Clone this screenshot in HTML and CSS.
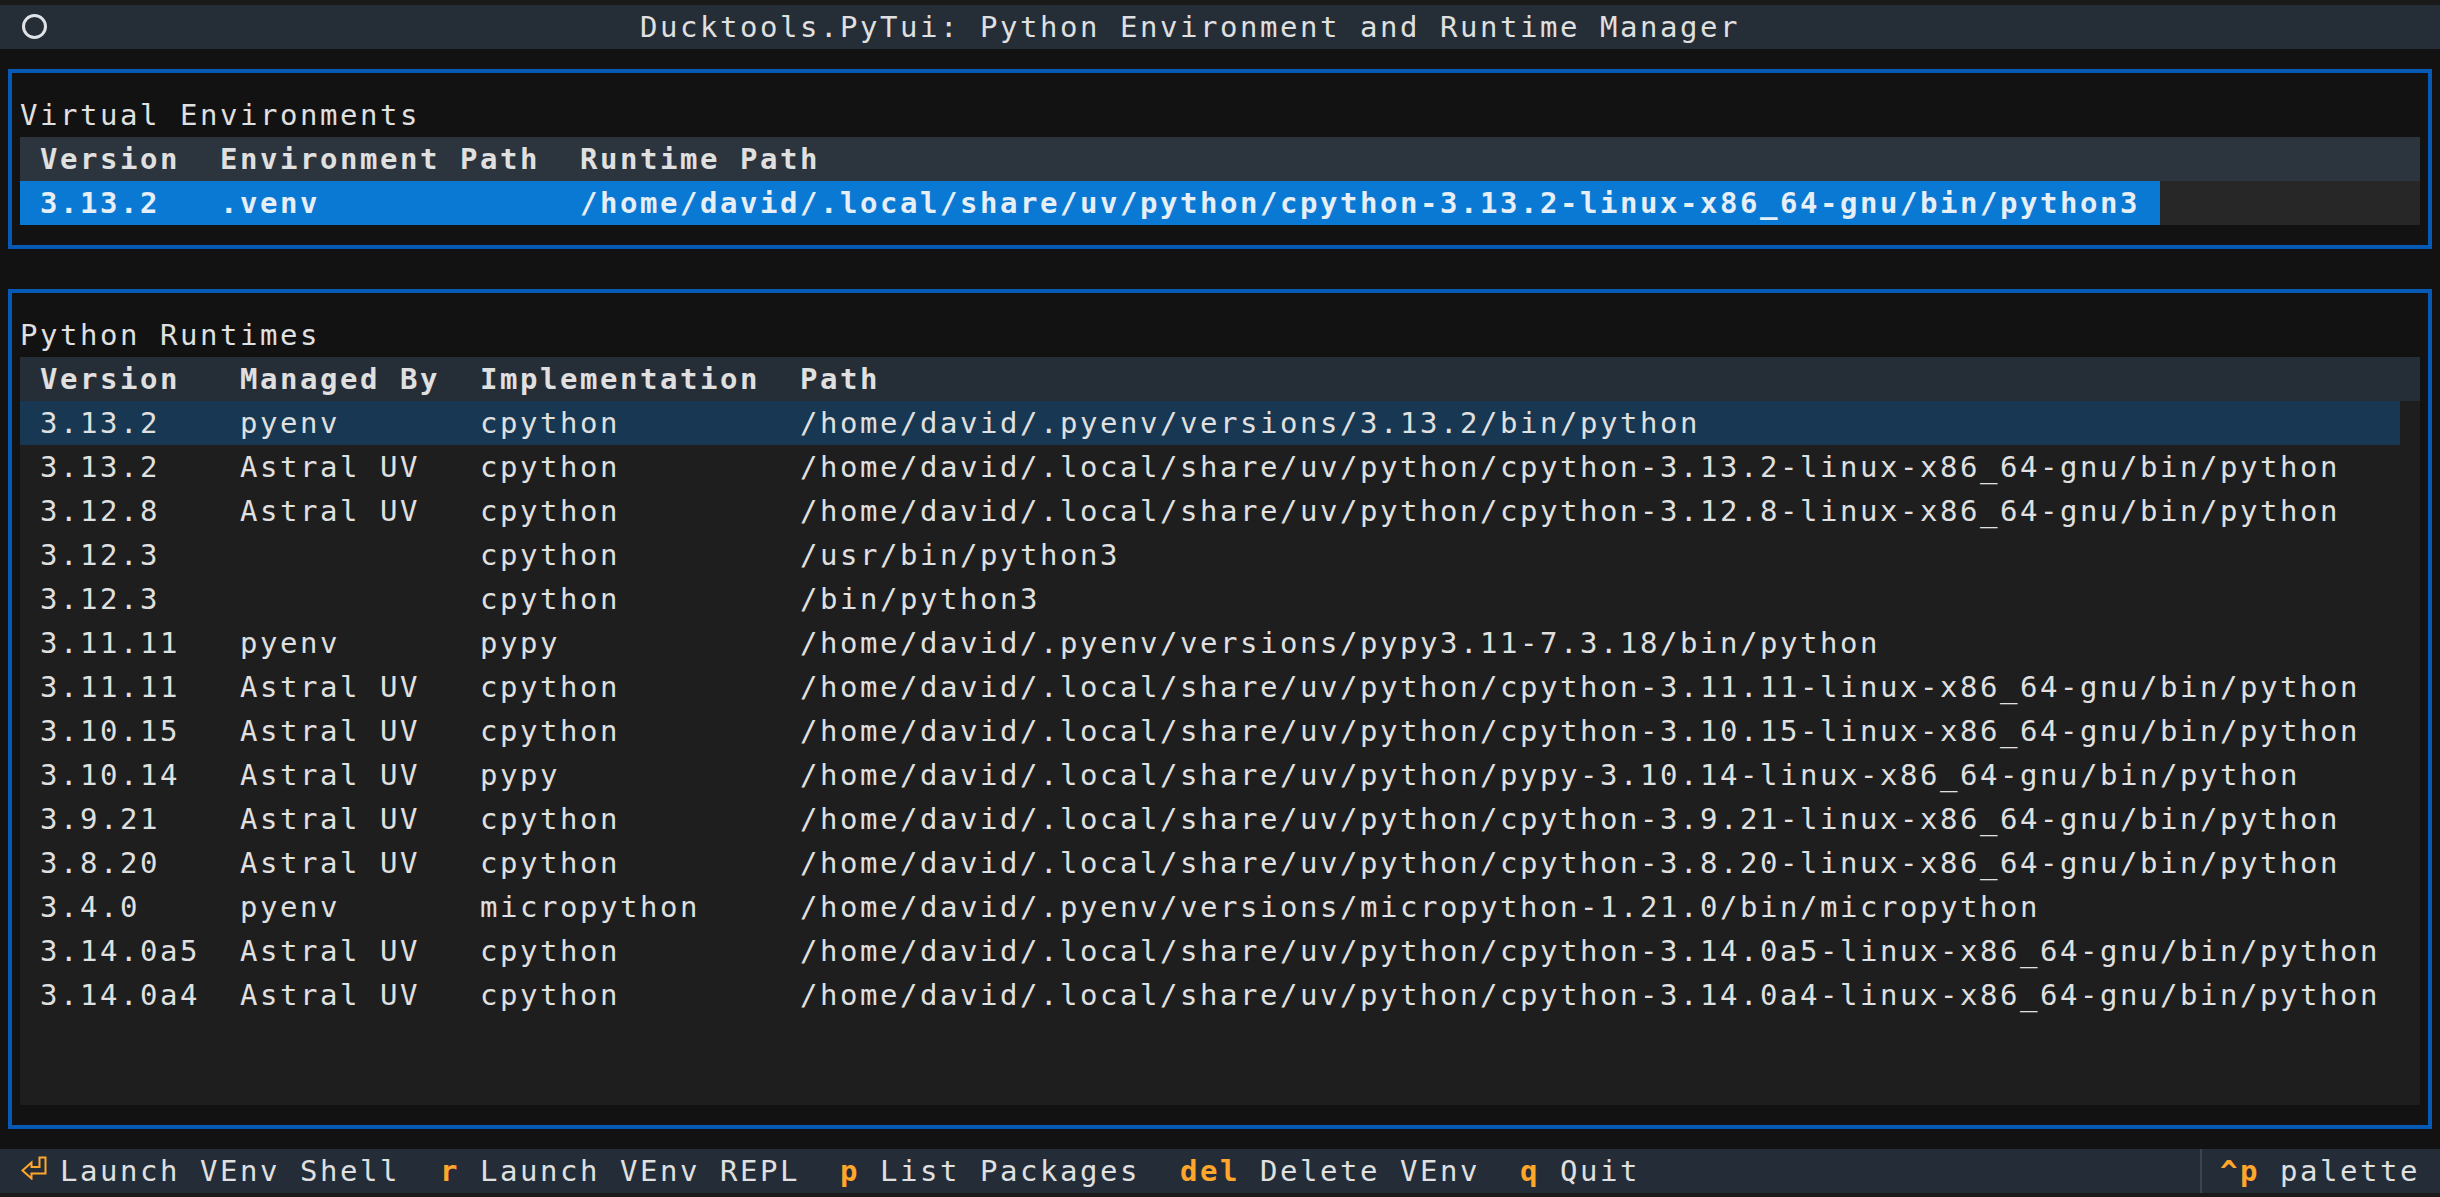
FILE: index.html
```html
<!DOCTYPE html>
<html lang="en">
<head>
<meta charset="utf-8">
<title>Ducktools.PyTui</title>
<link rel="stylesheet" href="styles.css">
</head>
<body>
<div class="app">
  <header class="hdr">
    <div class="hdr-icon"><span class="ring"></span></div>
    <div class="hdr-title">Ducktools.PyTui: Python Environment and Runtime Manager</div>
    <div class="hdr-clock"></div>
  </header>

  <section class="panel panel-venv">
    <div class="label">Virtual Environments</div>
    <div class="table table-focus">
      <div class="row head">
        <div class="c w9">Version</div><div class="c w18">Environment Path</div><div class="c w80">Runtime Path</div>
      </div>
      <div class="row cur-focus">
        <div class="c w9">3.13.2</div><div class="c w18">.venv</div><div class="c w80">/home/david/.local/share/uv/python/cpython-3.13.2-linux-x86_64-gnu/bin/python3</div>
      </div>
    </div>
  </section>

  <section class="panel panel-rt">
    <div class="label">Python Runtimes</div>
    <div class="table table-blur rt">
      <div class="row head">
        <div class="c w10">Version</div><div class="c w12">Managed By</div><div class="c w16">Implementation</div><div class="c w81">Path</div>
      </div>
      <div class="row cur-blur">
        <div class="c w10">3.13.2</div><div class="c w12">pyenv</div><div class="c w16">cpython</div><div class="c w81">/home/david/.pyenv/versions/3.13.2/bin/python</div>
      </div>
      <div class="row">
        <div class="c w10">3.13.2</div><div class="c w12">Astral UV</div><div class="c w16">cpython</div><div class="c w81">/home/david/.local/share/uv/python/cpython-3.13.2-linux-x86_64-gnu/bin/python</div>
      </div>
      <div class="row">
        <div class="c w10">3.12.8</div><div class="c w12">Astral UV</div><div class="c w16">cpython</div><div class="c w81">/home/david/.local/share/uv/python/cpython-3.12.8-linux-x86_64-gnu/bin/python</div>
      </div>
      <div class="row">
        <div class="c w10">3.12.3</div><div class="c w12"></div><div class="c w16">cpython</div><div class="c w81">/usr/bin/python3</div>
      </div>
      <div class="row">
        <div class="c w10">3.12.3</div><div class="c w12"></div><div class="c w16">cpython</div><div class="c w81">/bin/python3</div>
      </div>
      <div class="row">
        <div class="c w10">3.11.11</div><div class="c w12">pyenv</div><div class="c w16">pypy</div><div class="c w81">/home/david/.pyenv/versions/pypy3.11-7.3.18/bin/python</div>
      </div>
      <div class="row">
        <div class="c w10">3.11.11</div><div class="c w12">Astral UV</div><div class="c w16">cpython</div><div class="c w81">/home/david/.local/share/uv/python/cpython-3.11.11-linux-x86_64-gnu/bin/python</div>
      </div>
      <div class="row">
        <div class="c w10">3.10.15</div><div class="c w12">Astral UV</div><div class="c w16">cpython</div><div class="c w81">/home/david/.local/share/uv/python/cpython-3.10.15-linux-x86_64-gnu/bin/python</div>
      </div>
      <div class="row">
        <div class="c w10">3.10.14</div><div class="c w12">Astral UV</div><div class="c w16">pypy</div><div class="c w81">/home/david/.local/share/uv/python/pypy-3.10.14-linux-x86_64-gnu/bin/python</div>
      </div>
      <div class="row">
        <div class="c w10">3.9.21</div><div class="c w12">Astral UV</div><div class="c w16">cpython</div><div class="c w81">/home/david/.local/share/uv/python/cpython-3.9.21-linux-x86_64-gnu/bin/python</div>
      </div>
      <div class="row">
        <div class="c w10">3.8.20</div><div class="c w12">Astral UV</div><div class="c w16">cpython</div><div class="c w81">/home/david/.local/share/uv/python/cpython-3.8.20-linux-x86_64-gnu/bin/python</div>
      </div>
      <div class="row">
        <div class="c w10">3.4.0</div><div class="c w12">pyenv</div><div class="c w16">micropython</div><div class="c w81">/home/david/.pyenv/versions/micropython-1.21.0/bin/micropython</div>
      </div>
      <div class="row">
        <div class="c w10">3.14.0a5</div><div class="c w12">Astral UV</div><div class="c w16">cpython</div><div class="c w81">/home/david/.local/share/uv/python/cpython-3.14.0a5-linux-x86_64-gnu/bin/python</div>
      </div>
      <div class="row">
        <div class="c w10">3.14.0a4</div><div class="c w12">Astral UV</div><div class="c w16">cpython</div><div class="c w81">/home/david/.local/share/uv/python/cpython-3.14.0a4-linux-x86_64-gnu/bin/python</div>
      </div>
    </div>
  </section>

  <footer class="ftr">
    <div class="fitem"><span class="fkey ficon"><svg class="enter" width="26" height="24" viewBox="0 0 26 24"><path d="M1.5 14.5 L10.5 6.5 L10.5 11 L18.5 11 L18.5 1.5 L24.5 1.5 L24.5 17.5 L10.5 17.5 L10.5 22.5 Z" fill="none" stroke="#ffa62b" stroke-width="2" stroke-linejoin="miter"/></svg></span><span class="fdesc">Launch VEnv Shell</span></div>
    <div class="fitem"><span class="fkey">r</span><span class="fdesc">Launch VEnv REPL</span></div>
    <div class="fitem"><span class="fkey">p</span><span class="fdesc">List Packages</span></div>
    <div class="fitem"><span class="fkey">del</span><span class="fdesc">Delete VEnv</span></div>
    <div class="fitem"><span class="fkey">q</span><span class="fdesc">Quit</span></div>
    <div class="fitem fpalette"><span class="fkey">^p</span><span class="fdesc">palette</span></div>
  </footer>
</div>
</body>
</html>
```

FILE: styles.css
```css
* {
  box-sizing: border-box;
}

html, body {
  margin: 0;
  padding: 0;
  background: #1a1a1a;
}

body {
  font-family: "DejaVu Sans Mono", "Liberation Mono", monospace;
  font-size: 29px;
  letter-spacing: 2.54px;
  color: #e0e0e0;
  width: 2440px;
  height: 1197px;
  overflow: hidden;
}

.app {
  margin-top: 5px;
  width: 2440px;
  height: 1188px;
  background: #121212;
  display: flex;
  flex-direction: column;
}

/* Header */
.hdr {
  height: 44px;
  flex: 0 0 44px;
  background: #252d37;
  display: flex;
  align-items: center;
  line-height: 44px;
}

.hdr-icon {
  width: 160px;
  height: 44px;
  display: flex;
  align-items: center;
}

.ring {
  display: block;
  width: 25px;
  height: 25px;
  margin-left: 22px;
  margin-top: -1px;
  border: 3px solid #dfe2e6;
  border-radius: 50%;
}

.hdr-title {
  flex: 1;
  text-align: center;
  white-space: pre;
  color: #e0e0e0;
}

.hdr-clock {
  width: 220px;
}

/* Panels */
.panel {
  margin: 20px 8px;
  border: 4px solid #0659b4;
  padding: 20px 8px;
  display: flex;
  flex-direction: column;
}

.panel-venv {
  height: 180px;
  flex: 0 0 180px;
}

.panel-rt {
  height: 840px;
  flex: 0 0 840px;
}

.label {
  height: 44px;
  line-height: 44px;
  white-space: pre;
  padding-left: 0;
}

/* Tables */
.table {
  width: 2400px;
  display: flex;
  flex-direction: column;
}

.table-focus {
  background: #272727;
}

.table-blur {
  background: #1e1e1e;
  height: 748px;
}

.row {
  display: flex;
  height: 44px;
  flex: 0 0 44px;
}

.c {
  height: 44px;
  line-height: 44px;
  padding: 0 20px;
  white-space: pre;
  overflow: hidden;
}

.head {
  font-weight: bold;
}

.table-focus .head {
  background: #2c343d;
}

.table-blur .head {
  background: #252d36;
}

.cur-focus .c {
  background: #0a79d4;
  font-weight: bold;
  color: #e6eef6;
}

.cur-blur .c {
  background: #173752;
}

.w9 { width: 180px; }
.w10 { width: 200px; }
.w12 { width: 240px; }
.w16 { width: 320px; }
.w18 { width: 360px; }
.w80 { width: 1600px; }
.w81 { width: 1620px; }

/* Footer */
.ftr {
  height: 44px;
  flex: 0 0 44px;
  background: #242d37;
  display: flex;
  line-height: 44px;
  white-space: pre;
}

.fitem {
  display: flex;
  padding: 0 20px;
  gap: 20px;
}

.fkey {
  color: #ffa62b;
  font-weight: bold;
}

.ficon {
  width: 20px;
  position: relative;
}

.enter {
  position: absolute;
  left: 1px;
  top: 7px;
}

.fdesc {
  color: #e0e0e0;
}

.fpalette {
  margin-left: auto;
  border-left: 2px solid #3c444d;
  padding-left: 18px;
}
```
